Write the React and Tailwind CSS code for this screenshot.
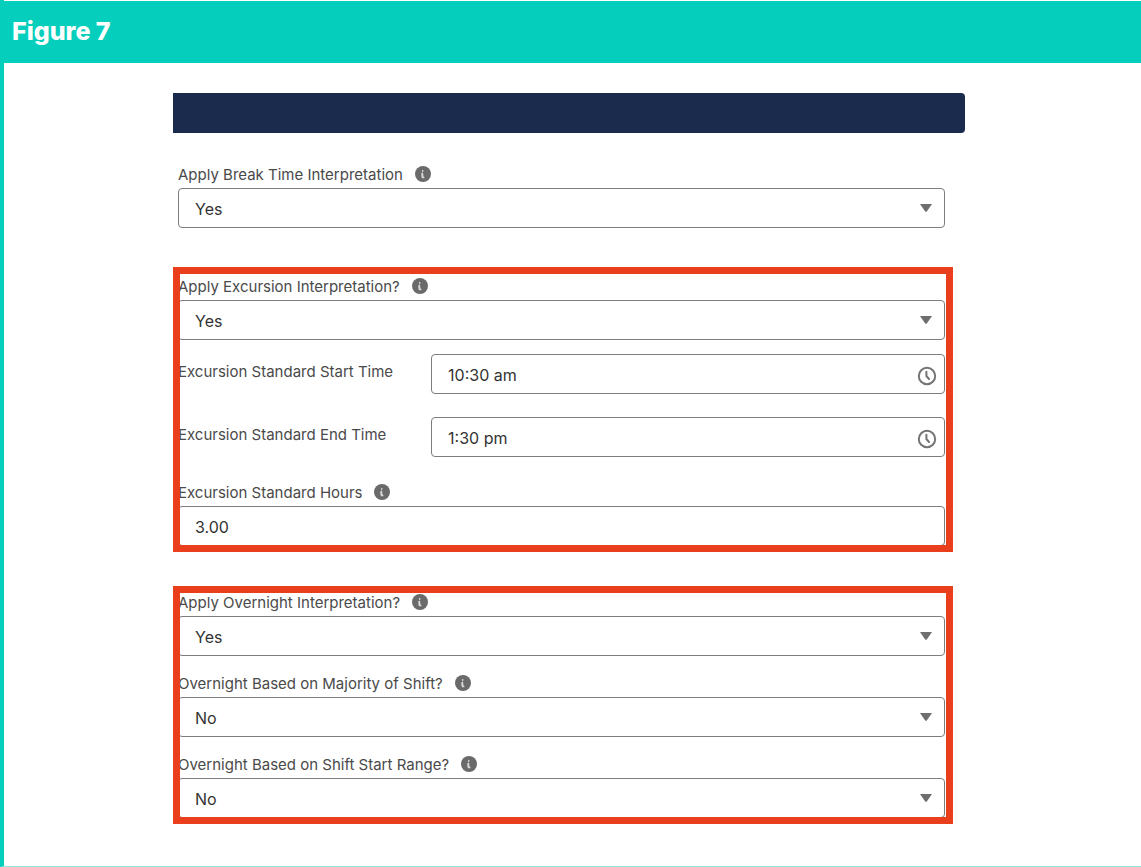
import React, { useState } from "react";

const InfoIcon = () => (
  <svg viewBox="0 0 16 16" className="size-4 shrink-0" aria-hidden="true">
    <circle cx="8" cy="8" r="8" fill="#6a6a6a" />
    <path
      d="M7.2 3.8l1.3.4-.2 1.6-1.3.3zM6.3 7.2l1.7-.6.5 4 .9.5v1.1H7l-.6-1.6z"
      fill="#d8d8d8"
    />
  </svg>
);

const ClockIcon = () => (
  <svg
    viewBox="0 0 20 20"
    className="pointer-events-none absolute top-3 right-2 size-5"
    fill="none"
    stroke="#747474"
    strokeWidth="2"
    strokeLinecap="round"
    strokeLinejoin="round"
    aria-hidden="true"
  >
    <circle cx="10" cy="10" r="8.2" />
    <path d="M9.4 5.8v4.2l2.6 3" />
  </svg>
);

const FieldLabel = ({ id, children }) => (
  <div className="flex h-7 items-center gap-3">
    <label htmlFor={id} className="pt-0.5 text-[15px] text-[#4a4a4a]">
      {children}
    </label>
    <InfoIcon />
  </div>
);

const SelectField = ({ id, label, initial }) => {
  const [value, setValue] = useState(initial);

  return (
    <div>
      <FieldLabel id={id}>{label}</FieldLabel>
      <div className="relative">
        <select
          id={id}
          value={value}
          onChange={(e) => setValue(e.target.value)}
          className="block h-10 w-full appearance-none rounded border border-[#7d7d7d] bg-white px-4 pt-0.5 text-base text-[#333333]"
        >
          <option>Yes</option>
          <option>No</option>
        </select>
        <svg
          viewBox="0 0 12 8"
          className="pointer-events-none absolute top-4 right-[13px] h-2 w-3"
          aria-hidden="true"
        >
          <path d="M0 0h12L6.8 7.4q-.8.9-1.6 0z" fill="#6e6e6e" />
        </svg>
      </div>
    </div>
  );
};

const TimeField = ({ id, label, initial }) => (
  <div className="flex items-start">
    <label
      htmlFor={id}
      className="w-[33%] text-[15px] leading-9 text-[#4a4a4a]"
    >
      {label}
    </label>
    <div className="relative flex-1">
      <input
        id={id}
        type="text"
        defaultValue={initial}
        className="block h-10 w-full rounded border border-[#7d7d7d] bg-white px-4 pt-0.5 text-base text-[#333333]"
      />
      <ClockIcon />
    </div>
  </div>
);

// The frame is drawn over the fields, so it covers their left and bottom edges
const Highlight = () => (
  <div className="pointer-events-none absolute inset-0 border-7 border-[#e93f1c]" />
);

const App = () => {
  return (
    <div className="flex min-h-screen flex-col border-b border-l-4 border-b-[#8fe9dc] border-l-[#05cfbc] bg-white pt-px font-['Inter',sans-serif]">
      <header className="-ml-1 bg-[#05cfbc] px-3 pt-3 pb-3.5">
        <h1 className="text-[25px] leading-9 font-extrabold text-white">
          Figure 7
        </h1>
      </header>

      <main className="pt-[30px] pr-[7px] pb-[42px]">
        <div className="mx-auto max-w-[792px]">
          <div className="h-10 rounded-r bg-[#1b2b4e]" />

          <section className="mt-[27px] mr-3 pr-2 pl-[5px]">
            <SelectField
              id="break-time"
              label="Apply Break Time Interpretation"
              initial="Yes"
            />
          </section>

          <section className="relative mt-[39px] mr-3 pt-[5px] pr-2 pb-1.5 pl-[5px]">
            <SelectField
              id="excursion"
              label="Apply Excursion Interpretation?"
              initial="Yes"
            />
            <div className="mt-3.5 mb-[21px] flex flex-col gap-[23px]">
              <TimeField
                id="excursion-start"
                label="Excursion Standard Start Time"
                initial="10:30 am"
              />
              <TimeField
                id="excursion-end"
                label="Excursion Standard End Time"
                initial="1:30 pm"
              />
            </div>
            <FieldLabel id="excursion-hours">
              Excursion Standard Hours
            </FieldLabel>
            <input
              id="excursion-hours"
              type="text"
              defaultValue="3.00"
              className="block h-10 w-full rounded border border-[#7d7d7d] bg-white px-4 pt-0.5 text-base text-[#333333]"
            />
            <Highlight />
          </section>

          <section className="relative mt-[34px] mr-3 flex flex-col gap-[13px] pt-0.5 pr-2 pb-1.5 pl-[5px]">
            <SelectField
              id="overnight"
              label="Apply Overnight Interpretation?"
              initial="Yes"
            />
            <SelectField
              id="overnight-majority"
              label="Overnight Based on Majority of Shift?"
              initial="No"
            />
            <SelectField
              id="overnight-range"
              label="Overnight Based on Shift Start Range?"
              initial="No"
            />
            <Highlight />
          </section>
        </div>
      </main>
    </div>
  );
};

export default App;
